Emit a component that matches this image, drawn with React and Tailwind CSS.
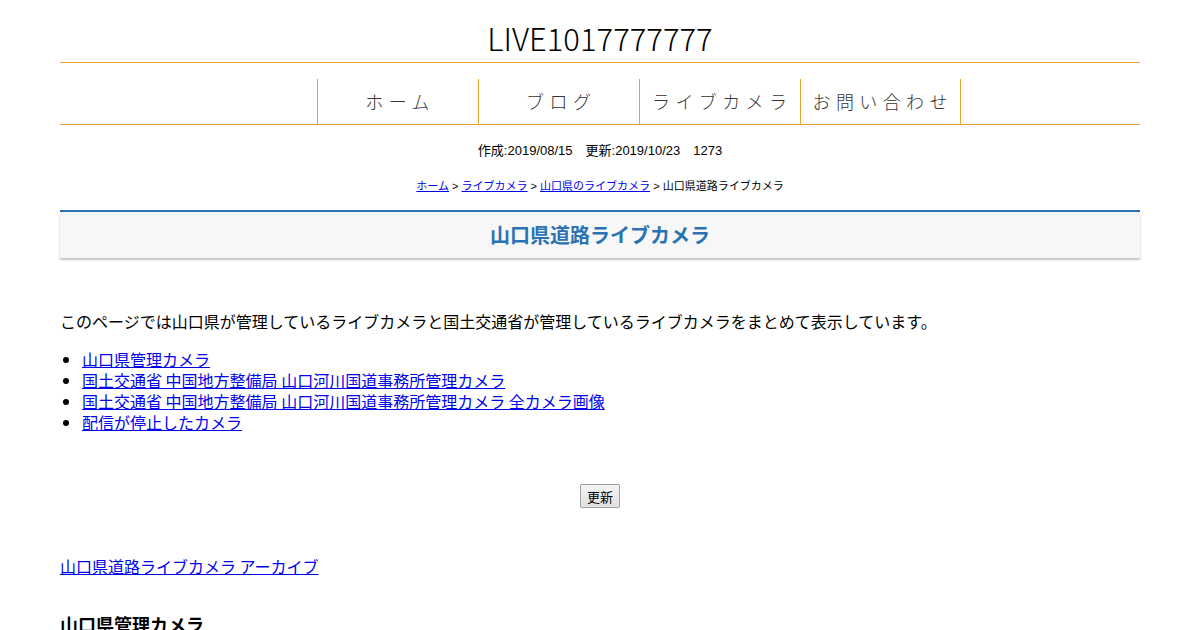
import React from 'react';

const navItems = ['ホーム', 'ブログ', 'ライブカメラ', 'お問い合わせ'];

const links = [
    '山口県管理カメラ',
    '国土交通省 中国地方整備局 山口河川国道事務所管理カメラ',
    '国土交通省 中国地方整備局 山口河川国道事務所管理カメラ 全カメラ画像',
    '配信が停止したカメラ',
];

const jp = "font-['Noto_Sans_CJK_JP','Noto_Sans',sans-serif]";

export default function App() {
    return (
        <div className={`w-[1200px] h-[630px] overflow-hidden bg-white text-black ${jp}`}>
            <div className="w-[1080px] mx-auto">
                <header className="h-[62px] flex items-end justify-center pb-[4px]">
                    <h1 className="text-[31px] font-light leading-[40px]">LIVE1017777777</h1>
                </header>
                <div className="h-px bg-[#e9a32f]" />
                <nav className="h-[61px] flex items-end justify-center">
                    <ul className="flex pl-[77px]">
                        {navItems.map((item, i) => (
                            <li
                                key={item}
                                className={`w-[161px] h-[45px] flex items-center justify-center border-l border-[#e9a32f] ${i === navItems.length - 1 ? 'border-r' : ''}`}
                            >
                                <span className="text-[18px] font-light text-[#333] tracking-[0.3em] pl-[0.3em]">{item}</span>
                            </li>
                        ))}
                    </ul>
                </nav>
                <div className="h-px bg-[#e9a32f]" />
                <p className="mt-[17px] text-center text-[13px] leading-[18px] font-['Liberation_Sans','Noto_Sans_CJK_JP',sans-serif]">
                    作成:2019/08/15　更新:2019/10/23　1273
                </p>
                <p className="mt-[17px] text-center text-[11px] leading-[18px] font-['Liberation_Sans','Noto_Sans_CJK_JP',sans-serif]">
                    <a href="#" className="text-[#0000ee] underline">ホーム</a> &gt;{' '}
                    <a href="#" className="text-[#0000ee] underline">ライブカメラ</a> &gt;{' '}
                    <a href="#" className="text-[#0000ee] underline">山口県のライブカメラ</a> &gt; 山口県道路ライブカメラ
                </p>
                <div className="mt-[15px] h-[48px] border-t-2 border-[#2a72b3] bg-[#f7f7f7] shadow-[0_2px_2px_rgba(0,0,0,0.25)] flex items-center justify-center">
                    <h2 className="text-[20px] font-bold text-[#2a72b3] leading-[28px]">山口県道路ライブカメラ</h2>
                </div>
                <p className="mt-[51px] text-[16px] leading-[24px]">
                    このページでは山口県が管理しているライブカメラと国土交通省が管理しているライブカメラをまとめて表示しています。
                </p>
                <ul className="mt-[16px] list-disc pl-[22px] text-[16px] leading-[21px]">
                    {links.map((l) => (
                        <li key={l} className="h-[21px]">
                            <a href="#" className="text-[#0000ee] underline">{l}</a>
                        </li>
                    ))}
                </ul>
                <div className="mt-[51px] flex justify-center">
                    <button className="h-[24px] px-[6px] text-[13px] border border-[#a0a0a0] rounded-[2px] bg-gradient-to-b from-[#f4f4f4] to-[#e2e2e2] leading-none">
                        更新
                    </button>
                </div>
                <p className="mt-[46px] text-[16px] leading-[24px]">
                    <a href="#" className="text-[#0000ee] underline">山口県道路ライブカメラ アーカイブ</a>
                </p>
                <h3 className="mt-[32px] text-[18px] font-bold leading-[28px]">山口県管理カメラ</h3>
            </div>
        </div>
    );
}
